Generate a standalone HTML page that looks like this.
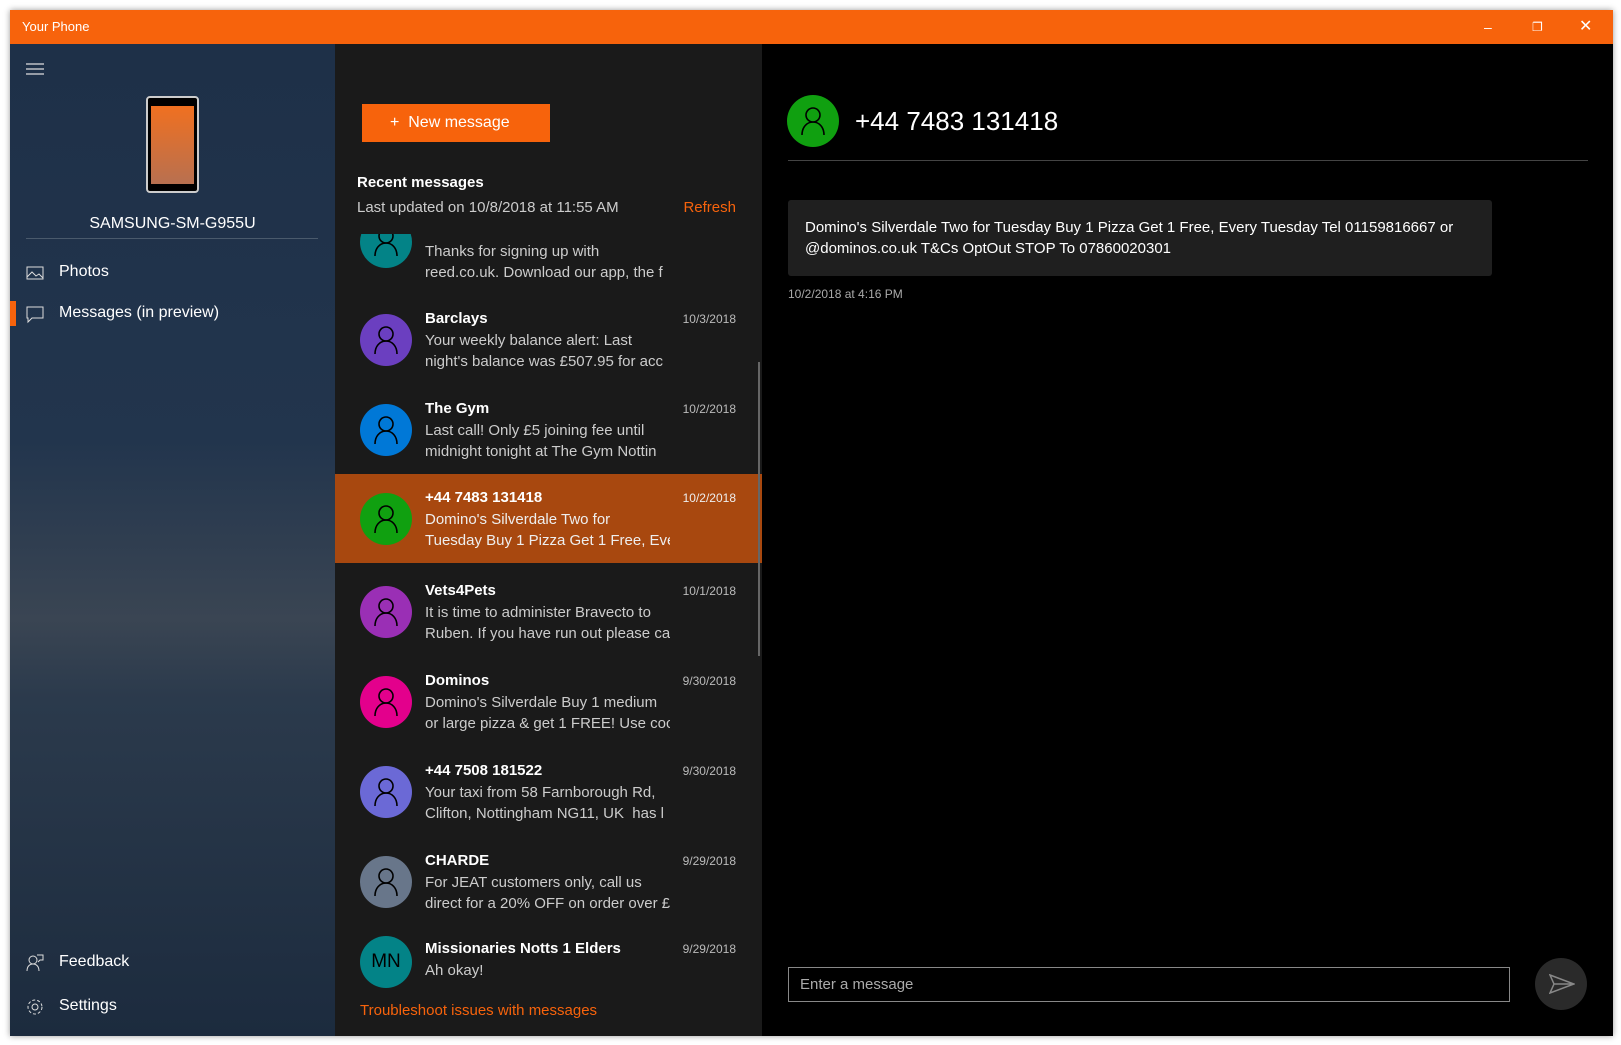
<!DOCTYPE html>
<html><head><meta charset="utf-8"><style>
*{margin:0;padding:0;box-sizing:border-box}
body{width:1621px;height:1045px;background:#fff;font-family:"Liberation Sans","Segoe UI",sans-serif;position:relative;overflow:hidden;color:#fff}
.win{position:absolute;left:10px;top:10px;width:1603px;height:1026px;background:#000;box-shadow:0 0 6px rgba(0,0,0,.4);overflow:hidden}
.title{position:absolute;left:0;top:0;width:100%;height:34px;background:#f7630c;font-size:13px;line-height:34px;padding-left:12px}
.ctl{position:absolute;top:0;font-size:14px;line-height:34px}
.side{position:absolute;left:0;top:34px;width:325px;height:992px;background:linear-gradient(180deg,#1e3048 0%,#22354d 40%,#3a4553 58%,#2b3a4c 66%,#1c2b3e 100%)}
.list{position:absolute;left:325px;top:34px;width:427px;height:992px;background:#1a1a1a}
.abs{position:absolute;white-space:nowrap}
.av{position:absolute;width:52px;height:52px;border-radius:50%;left:25px}
.av svg{position:absolute;left:14px;top:12px}
.nm{font-size:15px;font-weight:bold;left:90px}
.tx{font-size:15px;color:#ccc;left:90px;width:245px;overflow:hidden}
.dt{font-size:12px;color:#bbb;right:26px}
</style></head><body>
<div class="win">
<div class="title">Your Phone
<span class="ctl" style="left:1474px">&#8211;</span>
<span class="ctl" style="left:1522px;font-size:12px">&#10064;</span>
<span class="ctl" style="left:1569px;font-size:16px">&#10005;</span></div>

<div class="side">
<svg class="abs" style="left:16px;top:18px" width="18" height="14"><path d="M0 2h18M0 7h18M0 12h18" stroke="#ddd" stroke-width="1.3"/></svg>
<div class="abs" style="left:136px;top:52px;width:53px;height:97px;border:2px solid #ccc;border-radius:4px;background:#000;padding:8px 3px 7px"><div style="width:100%;height:100%;background:linear-gradient(#f07020,#b87050)"></div></div>
<div class="abs" style="left:0;width:325px;text-align:center;top:171px;font-size:16px">SAMSUNG-SM-G955U</div>
<div class="abs" style="left:16px;top:194px;width:292px;height:1px;background:#4a5a6c"></div>
<svg class="abs" style="left:16px;top:221px" width="18" height="16"><rect x="1" y="2" width="16" height="12" fill="none" stroke="#ddd"/><path d="M1 12l5-5 4 4 3-2 4 4" fill="none" stroke="#ddd"/></svg>
<div class="abs" style="left:49px;top:219px;font-size:16px">Photos</div>
<div class="abs" style="left:0;top:257px;width:6px;height:25px;background:#f7630c"></div>
<svg class="abs" style="left:16px;top:262px" width="18" height="18"><path d="M1 1h16v11H6l-4 4v-4H1z" fill="none" stroke="#ddd"/></svg>
<div class="abs" style="left:49px;top:260px;font-size:16px">Messages (in preview)</div>
<svg class="abs" style="left:16px;top:910px" width="18" height="18"><circle cx="7" cy="6" r="4" fill="none" stroke="#ddd"/><path d="M1 17c0-5 3-7 6-7s6 2 6 7M11 1h6v5h-3l-2 2" fill="none" stroke="#ddd"/></svg>
<div class="abs" style="left:49px;top:909px;font-size:16px">Feedback</div>
<svg class="abs" style="left:16px;top:954px" width="18" height="18"><circle cx="9" cy="9" r="3" fill="none" stroke="#ddd"/><circle cx="9" cy="9" r="7" fill="none" stroke="#ddd" stroke-dasharray="3 2"/></svg>
<div class="abs" style="left:49px;top:953px;font-size:16px">Settings</div>
</div>

<div class="list">
<div class="abs" style="left:27px;top:60px;width:188px;height:38px;background:#f7630c;font-size:16px;line-height:38px;padding-left:28px">+&nbsp;&nbsp;New message</div>
<div class="abs" style="left:22px;top:130px;font-size:15px;font-weight:bold">Recent messages</div>
<div class="abs" style="left:22px;top:155px;font-size:15px;color:#ccc">Last updated on 10/8/2018 at 11:55 AM</div>
<div class="abs" style="right:26px;top:155px;font-size:15px;color:#f7630c">Refresh</div>
<div class="abs" style="left:0;top:190px;width:427px;height:771px;overflow:hidden">

<div class="abs" style="left:0;top:-18px;width:427px;height:90px">
<div class="av" style="top:0px;background:#038387"><svg width="24" height="28"><circle cx="12" cy="8" r="7" fill="none" stroke="#000" stroke-width="1.6"/><path d="M1 28c0-8 5-13 11-13s11 5 11 13" fill="none" stroke="#000" stroke-width="1.6"/></svg></div>
<div class="abs tx" style="top:27px">Thanks for signing up with</div><div class="abs tx" style="top:48px">reed.co.uk. Download our app, the f</div></div>

<div class="abs" style="left:0;top:67px;width:427px;height:90px">
<div class="av" style="top:13px;background:#6b3fc0"><svg width="24" height="28"><circle cx="12" cy="8" r="7" fill="none" stroke="#000" stroke-width="1.6"/><path d="M1 28c0-8 5-13 11-13s11 5 11 13" fill="none" stroke="#000" stroke-width="1.6"/></svg></div>
<div class="abs nm" style="top:9px">Barclays</div><div class="abs dt" style="top:11px">10/3/2018</div>
<div class="abs tx" style="top:31px">Your weekly balance alert: Last</div><div class="abs tx" style="top:52px">night's balance was £507.95 for acc</div></div>

<div class="abs" style="left:0;top:157px;width:427px;height:90px">
<div class="av" style="top:13px;background:#0078d7"><svg width="24" height="28"><circle cx="12" cy="8" r="7" fill="none" stroke="#000" stroke-width="1.6"/><path d="M1 28c0-8 5-13 11-13s11 5 11 13" fill="none" stroke="#000" stroke-width="1.6"/></svg></div>
<div class="abs nm" style="top:9px">The Gym</div><div class="abs dt" style="top:11px">10/2/2018</div>
<div class="abs tx" style="top:31px">Last call! Only £5 joining fee until</div><div class="abs tx" style="top:52px">midnight tonight at The Gym Nottin</div></div>

<div class="abs" style="left:0;top:240px;width:427px;height:89px;background:#a8480f">
<div class="av" style="top:19px;background:#10a010"><svg width="24" height="28"><circle cx="12" cy="8" r="7" fill="none" stroke="#000" stroke-width="1.6"/><path d="M1 28c0-8 5-13 11-13s11 5 11 13" fill="none" stroke="#000" stroke-width="1.6"/></svg></div>
<div class="abs nm" style="top:15px">+44 7483 131418</div><div class="abs dt" style="top:17px;color:#eee">10/2/2018</div>
<div class="abs tx" style="top:37px;color:#eee">Domino's Silverdale Two for</div><div class="abs tx" style="top:58px;color:#eee">Tuesday Buy 1 Pizza Get 1 Free, Ever</div></div>

<div class="abs" style="left:0;top:339px;width:427px;height:90px">
<div class="av" style="top:13px;background:#9a2fb5"><svg width="24" height="28"><circle cx="12" cy="8" r="7" fill="none" stroke="#000" stroke-width="1.6"/><path d="M1 28c0-8 5-13 11-13s11 5 11 13" fill="none" stroke="#000" stroke-width="1.6"/></svg></div>
<div class="abs nm" style="top:9px">Vets4Pets</div><div class="abs dt" style="top:11px">10/1/2018</div>
<div class="abs tx" style="top:31px">It is time to administer Bravecto to</div><div class="abs tx" style="top:52px">Ruben. If you have run out please ca</div></div>

<div class="abs" style="left:0;top:429px;width:427px;height:90px">
<div class="av" style="top:13px;background:#e3008c"><svg width="24" height="28"><circle cx="12" cy="8" r="7" fill="none" stroke="#000" stroke-width="1.6"/><path d="M1 28c0-8 5-13 11-13s11 5 11 13" fill="none" stroke="#000" stroke-width="1.6"/></svg></div>
<div class="abs nm" style="top:9px">Dominos</div><div class="abs dt" style="top:11px">9/30/2018</div>
<div class="abs tx" style="top:31px">Domino's Silverdale Buy 1 medium</div><div class="abs tx" style="top:52px">or large pizza &amp; get 1 FREE! Use coc</div></div>

<div class="abs" style="left:0;top:519px;width:427px;height:90px">
<div class="av" style="top:13px;background:#6b69d6"><svg width="24" height="28"><circle cx="12" cy="8" r="7" fill="none" stroke="#000" stroke-width="1.6"/><path d="M1 28c0-8 5-13 11-13s11 5 11 13" fill="none" stroke="#000" stroke-width="1.6"/></svg></div>
<div class="abs nm" style="top:9px">+44 7508 181522</div><div class="abs dt" style="top:11px">9/30/2018</div>
<div class="abs tx" style="top:31px">Your taxi from 58 Farnborough Rd,</div><div class="abs tx" style="top:52px">Clifton, Nottingham NG11, UK&nbsp; has l</div></div>

<div class="abs" style="left:0;top:609px;width:427px;height:90px">
<div class="av" style="top:13px;background:#68768a"><svg width="24" height="28"><circle cx="12" cy="8" r="7" fill="none" stroke="#000" stroke-width="1.6"/><path d="M1 28c0-8 5-13 11-13s11 5 11 13" fill="none" stroke="#000" stroke-width="1.6"/></svg></div>
<div class="abs nm" style="top:9px">CHARDE</div><div class="abs dt" style="top:11px">9/29/2018</div>
<div class="abs tx" style="top:31px">For JEAT customers only, call us</div><div class="abs tx" style="top:52px">direct for a 20% OFF on order over £</div></div>

<div class="abs" style="left:0;top:699px;width:427px;height:90px">
<div class="av" style="top:3px;background:#038387;color:#000;font-size:19px;text-align:center;line-height:52px">MN</div>
<div class="abs nm" style="top:7px">Missionaries Notts 1 Elders</div><div class="abs dt" style="top:9px">9/29/2018</div>
<div class="abs tx" style="top:29px">Ah okay!</div></div>
</div>
<div class="abs" style="left:423px;top:318px;width:2px;height:294px;background:#666"></div>
<div class="abs" style="left:25px;top:958px;font-size:15px;color:#f7630c">Troubleshoot issues with messages</div>
</div>

<div class="abs" style="left:777px;top:85px;width:52px;height:52px;border-radius:50%;background:#10a010"><svg style="position:absolute;left:14px;top:12px" width="24" height="28"><circle cx="12" cy="8" r="7" fill="none" stroke="#000" stroke-width="1.6"/><path d="M1 28c0-8 5-13 11-13s11 5 11 13" fill="none" stroke="#000" stroke-width="1.6"/></svg></div>
<div class="abs" style="left:845px;top:96px;font-size:26px">+44 7483 131418</div>
<div class="abs" style="left:778px;top:150px;width:800px;height:1px;background:#444"></div>
<div class="abs" style="left:778px;top:190px;width:704px;height:76px;background:#1f1f1f;border-radius:3px;padding:17px 17px;font-size:15px;line-height:21px;white-space:normal">Domino's Silverdale Two for Tuesday Buy 1 Pizza Get 1 Free, Every Tuesday Tel 01159816667 or @dominos.co.uk T&amp;Cs OptOut STOP To 07860020301</div>
<div class="abs" style="left:778px;top:277px;font-size:12px;color:#aaa">10/2/2018 at 4:16 PM</div>
<div class="abs" style="left:778px;top:957px;width:722px;height:35px;border:1px solid #888;font-size:15px;color:#aaa;line-height:33px;padding-left:11px">Enter a message</div>
<div class="abs" style="left:1525px;top:948px;width:52px;height:52px;border-radius:50%;background:#2a2a2a"><svg style="position:absolute;left:14px;top:16px" width="26" height="20"><path d="M1 1l24 9-24 9 4-9z M5 10h20" fill="none" stroke="#888" stroke-width="1.5"/></svg></div>
</div>
</body></html>
